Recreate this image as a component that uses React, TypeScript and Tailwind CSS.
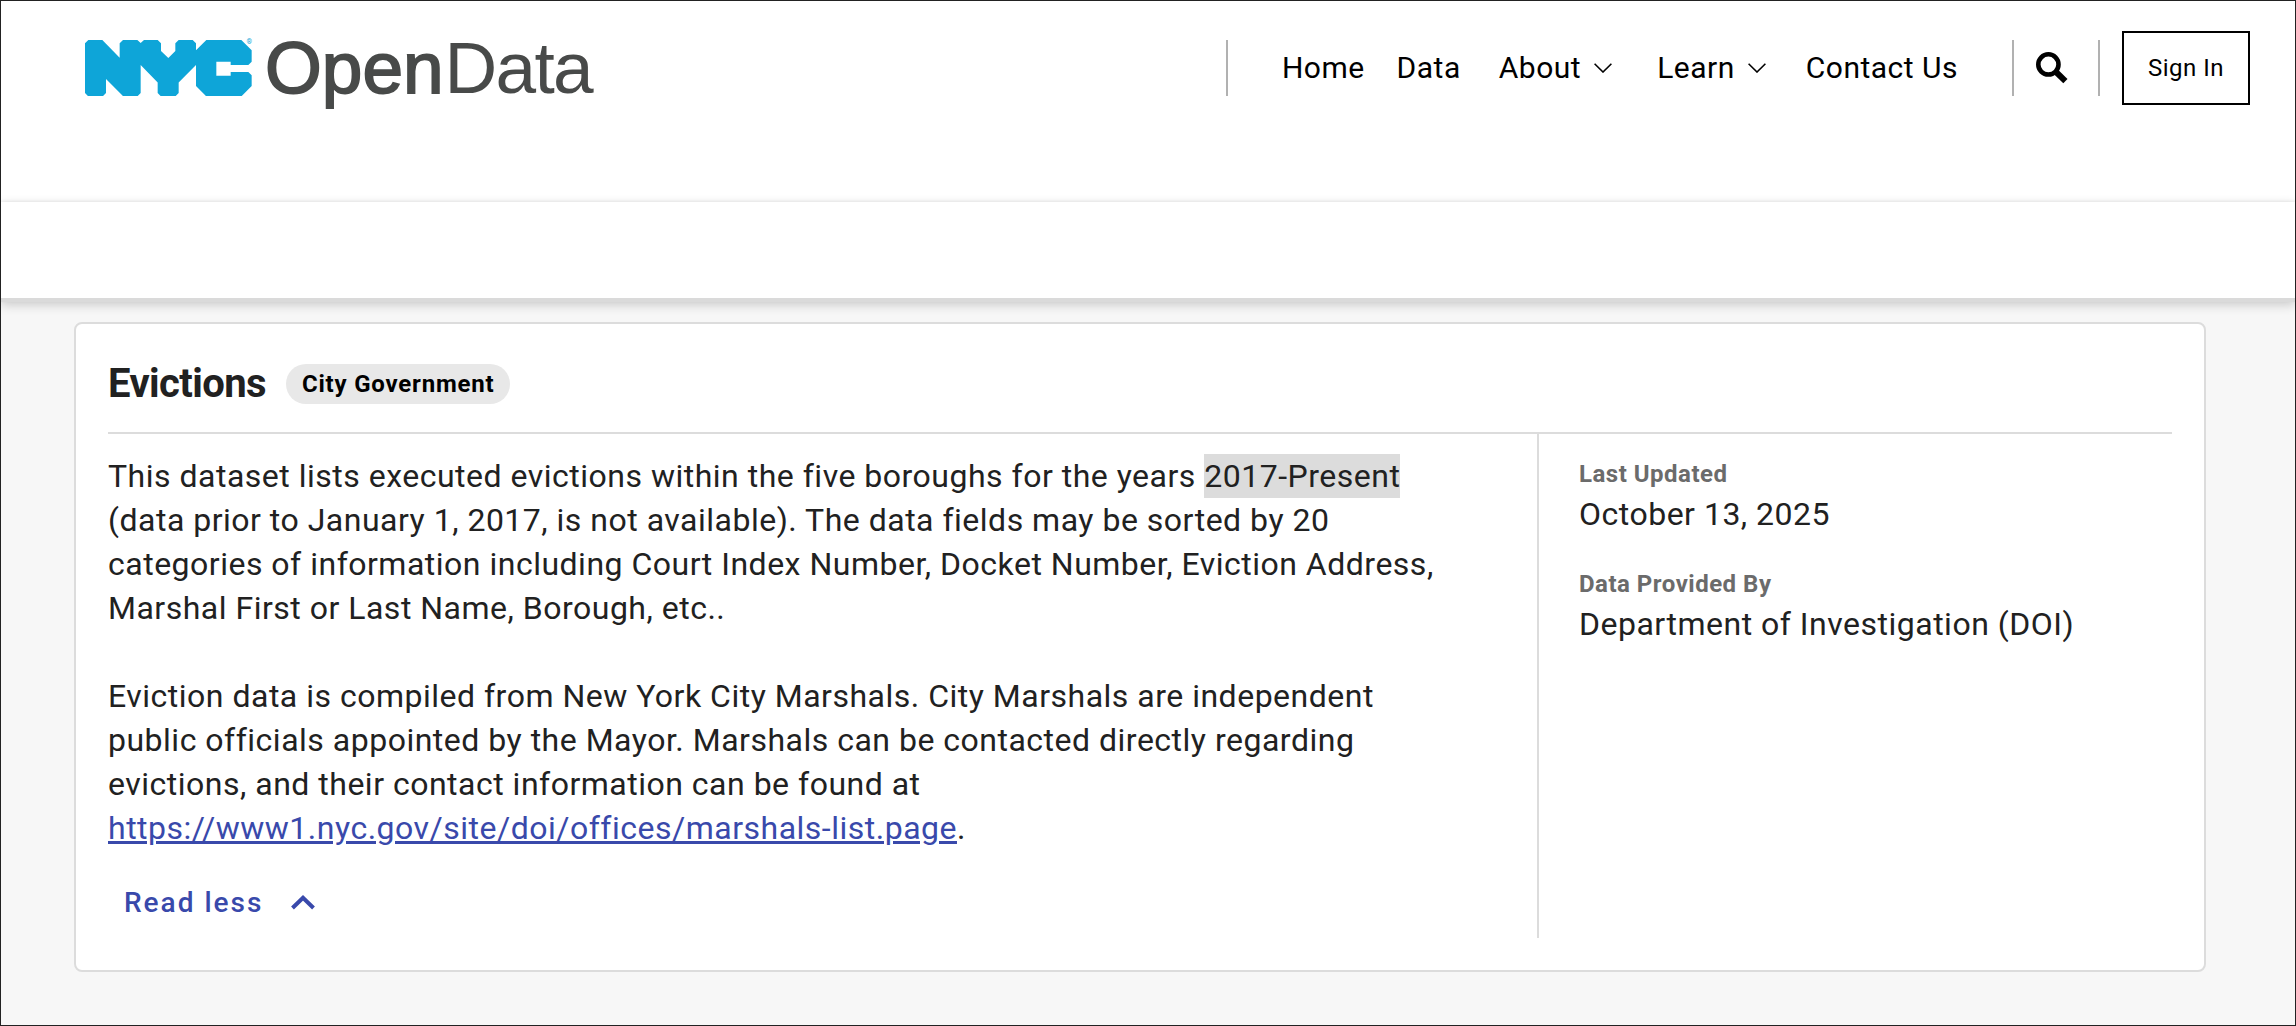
import type { ReactNode } from "react";

function NycMark() {
  return (
    <div className="relative h-[56.4px] w-[167px] shrink-0">
      <svg viewBox="15 15 501 169" preserveAspectRatio="none" className="h-full w-full text-[#0ea5d8]">
        <polygon
          fill="currentColor"
          points="25,15 67,15 119,68 119,25 129,15 172,15 182,24 192,15 233,15 243,25 243,48 265,69 286,48 286,25 296,15 338,15 348,25 348,46 379,15 484,15 515,46 515,80 505,90 452,90 452,80 409,80 409,122 452,122 452,111 505,111 515,121 515,153 484,184 379,184 348,153 348,90 296,142 296,174 286,184 243,184 233,174 233,142 182,90 182,174 172,184 130,184 78,132 78,174 68,184 25,184 15,174 15,25"
        />
      </svg>
      <span className="absolute -top-px right-0 text-[7px] leading-[7px] text-[#0ea5d8]">®</span>
    </div>
  );
}

function Logo() {
  return (
    <div className="flex items-center text-[#484a49]">
      <NycMark />
      <div className="ml-[13px] flex font-['Liberation_Sans',Arial,sans-serif] text-[73px] leading-[84px]">
        <span className="tracking-[0px] [-webkit-text-stroke:1.8px_#484a49]">Open</span>
        <span className="ml-px tracking-[-1.7px]">Data</span>
      </div>
    </div>
  );
}

function ThinChevron() {
  return (
    <svg viewBox="0 0 18 10" className="h-[10px] w-[18px]" fill="none" stroke="#000" strokeWidth="1.6">
      <path d="M0.6 0.8 9 9 17.4 0.8" />
    </svg>
  );
}

function Divider() {
  return <div className="h-[56px] w-[2px] bg-[#b1b1b1]" />;
}

function Header() {
  return (
    <header className="flex h-[201px] flex-col bg-white">
      <div className="flex h-[134px] items-center pl-[84px]">
        <Logo />
        <div className="ml-auto flex items-center pr-[45px]">
          <Divider />
          <nav className="mr-[54px] ml-[54px] flex items-center text-[30px] leading-[40px] tracking-[0.5px] text-black">
            <a>Home</a>
            <a className="ml-[32px]">Data</a>
            <a className="ml-[38px] flex items-center gap-[13px]">
              About <ThinChevron />
            </a>
            <a className="ml-[45px] flex items-center gap-[13px]">
              Learn <ThinChevron />
            </a>
            <a className="ml-[40px]">Contact Us</a>
          </nav>
          <Divider />
          <svg viewBox="0 0 32 32" className="mr-[30px] ml-[22px] h-[32px] w-[32px]" fill="none" stroke="#000">
            <circle cx="12.4" cy="12.4" r="10.1" strokeWidth="4.6" />
            <path d="M19 19 29.4 29.2" strokeWidth="6" />
          </svg>
          <Divider />
          <button className="ml-[22px] h-[74px] w-[128px] border-2 border-black text-center text-[24px] leading-[32px] tracking-[0.5px] text-black">
            Sign In
          </button>
        </div>
      </div>
    </header>
  );
}

function Fact({ label, children }: { label: string; children: ReactNode }) {
  return (
    <div>
      <dt className="text-[24px] leading-[36px] font-bold text-[#6b6b6b]">{label}</dt>
      <dd className="text-[32px] leading-[44px]">{children}</dd>
    </div>
  );
}

function DatasetCard() {
  return (
    <section className="mt-[20px] ml-[73px] h-[650px] w-[2132px] rounded-[8px] border-2 border-[#dcdcdc] bg-white px-[32px] text-[#212121]">
      <div className="flex h-[110px] items-center gap-[20px] border-b-2 border-[#dcdcdc] pt-[12px]">
        <h1 className="text-[40px] leading-[48px] font-bold tracking-[-0.6px]">Evictions</h1>
        <span className="h-[40px] rounded-full bg-[#e8e8e8] px-[16px] text-[24px] leading-[40px] font-bold tracking-[0.8px] text-black">
          City Government
        </span>
      </div>
      <div className="flex h-[504px] tracking-[0.5px]">
        <div className="w-[1431px] border-r-2 border-[#dcdcdc] pt-[20px]">
          <div className="text-[32px] leading-[44px]">
            <p>
              This dataset lists executed evictions within the five boroughs for the years{" "}
              <mark className="bg-[#dcdcdc] py-[3px] text-inherit">2017-Present</mark>
              <br />
              (data prior to January 1, 2017, is not available). The data fields may be sorted by 20
              <br />
              categories of information including Court Index Number, Docket Number, Eviction Address,
              <br />
              Marshal First or Last Name, Borough, etc..
            </p>
            <p className="mt-[44px]">
              Eviction data is compiled from New York City Marshals. City Marshals are independent
              <br />
              public officials appointed by the Mayor. Marshals can be contacted directly regarding
              <br />
              evictions, and their contact information can be found at
              <br />
              <a className="text-[#3949ab] underline decoration-[3px] underline-offset-[2px]">
                https://www1.nyc.gov/site/doi/offices/marshals-list.page
              </a>
              .
            </p>
          </div>
          <button className="mt-[33px] ml-[16px] flex items-center text-[28px] leading-[40px] font-medium tracking-[2px] text-[#3949ab]">
            Read less
            <svg viewBox="0 0 24 15" className="mb-[2px] ml-[28px] h-[15px] w-[24px]" fill="none" stroke="currentColor" strokeWidth="4">
              <path d="M1.5 13 12 2.8 22.5 13" />
            </svg>
          </button>
        </div>
        <dl className="flex flex-col gap-[30px] pt-[22px] pl-[40px]">
          <Fact label="Last Updated">October 13, 2025</Fact>
          <Fact label="Data Provided By">Department of Investigation (DOI)</Fact>
        </dl>
      </div>
    </section>
  );
}

export default function App() {
  return (
    <div className="h-[1026px] w-[2296px] overflow-hidden border border-[#222] bg-[#f7f7f7] font-[Roboto,sans-serif]">
      <Header />
      <div className="relative h-[100px] border-b-4 border-[#dadada] bg-white shadow-[0_3px_10px_rgba(0,0,0,0.18),0_-1px_3px_rgba(0,0,0,0.06)]" />
      <DatasetCard />
    </div>
  );
}
